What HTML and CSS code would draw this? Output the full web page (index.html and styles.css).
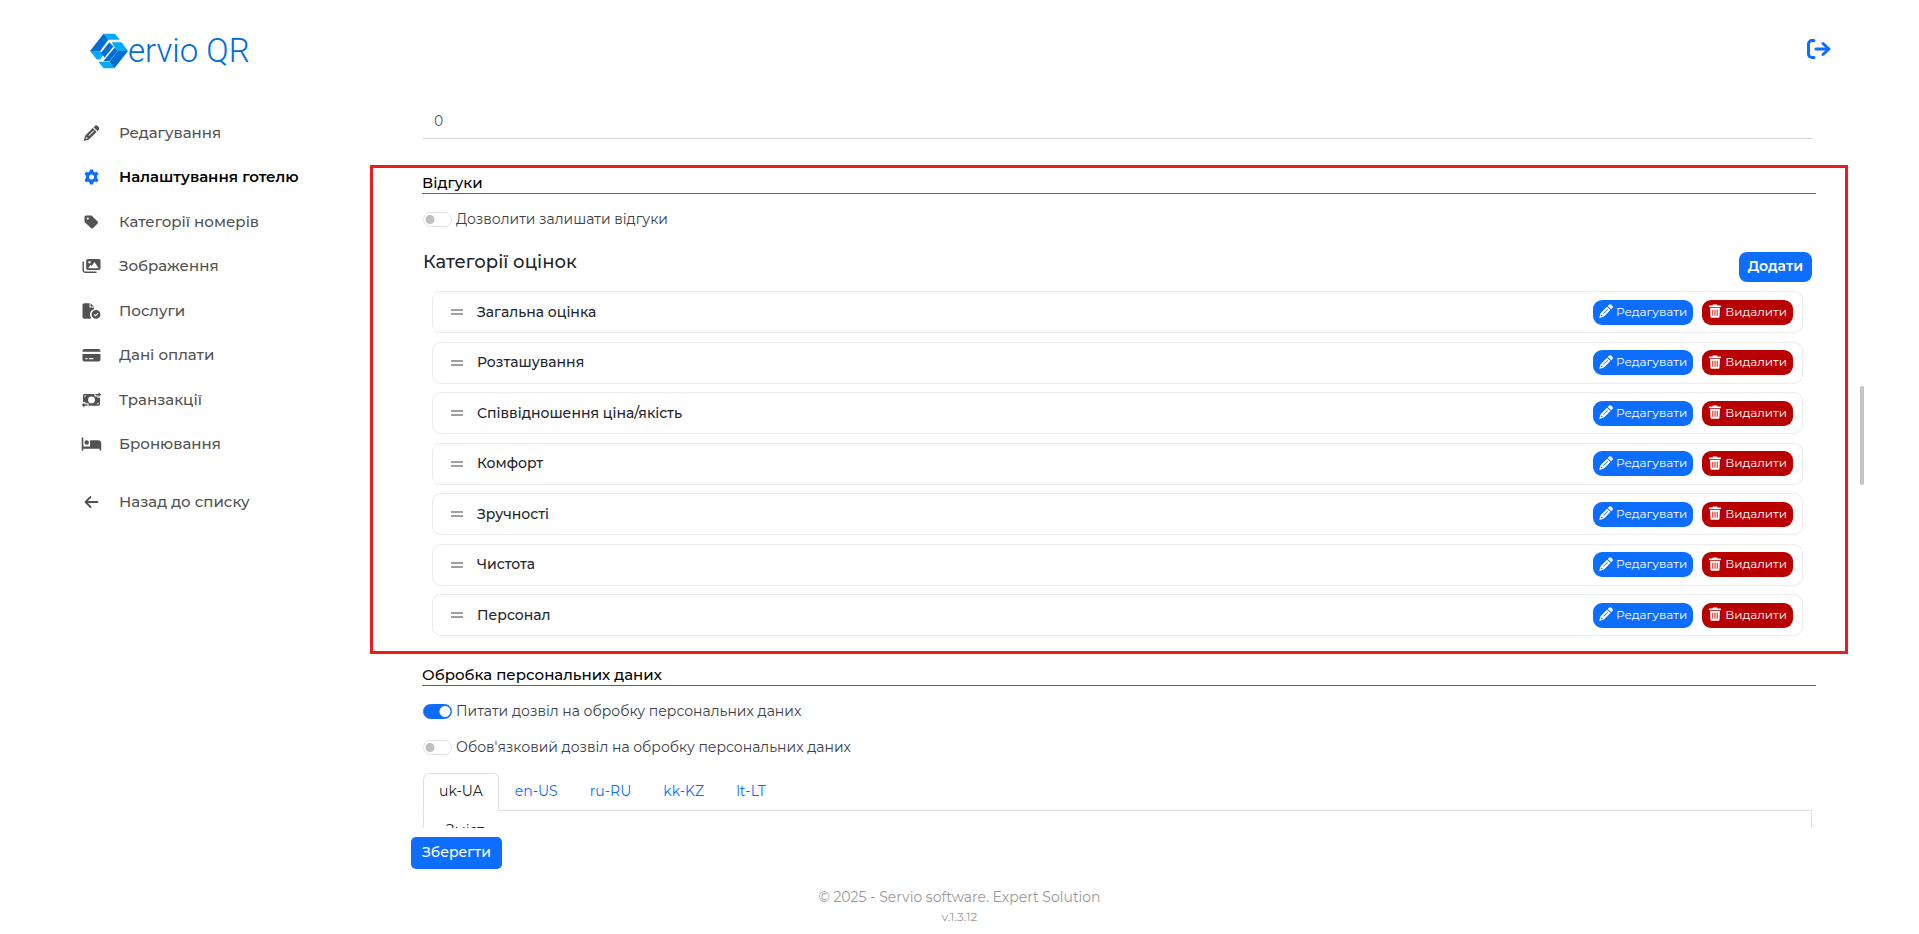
FILE: index.html
```html
<!DOCTYPE html>
<html lang="uk">
<head>
    <meta charset="UTF-8">
    <meta name="viewport" content="width=device-width, initial-scale=1">
    <title>Servio QR</title>
    <link rel="stylesheet" href="styles.css">
</head>
<body>
    <!-- Спільні іконки -->
    <svg class="sprite" aria-hidden="true">
        <symbol id="i-pencil" viewBox="0 0 16 16">
            <path fill-rule="evenodd" d="M11.300.9a2 2 0 0 1 2.800 0l1.100 1.100a2 2 0 0 1 0 2.800l-1.300 1.300-3.900-3.900zM9.200 3l3.900 3.900-7.200 7.200c-.3.3-.6.5-1 .6L.2 16l1.300-4.700c.1-.4.3-.7.6-1zM2.600 12l-.6 2 2-.6v-.9h-.9zM9.800 5.600 4.900 10.500l.6.6 4.900-4.900z"/>
        </symbol>
        <symbol id="i-trash" viewBox="0 0 14 16">
            <path fill-rule="evenodd" d="M4.700.5h4.600l.6 1.200H13a.8.8 0 0 1 0 2H1a.8.8 0 0 1 0-2h3.100zM1.400 4.500h11.200l-.4 9.800c0 .8-.7 1.500-1.500 1.500H3.300c-.8 0-1.500-.7-1.500-1.500zM4 6.500v7h1v-7zm2.500 0v7h1v-7zm2.500 0v7h1v-7z"/>
        </symbol>
        <symbol id="i-grip" viewBox="0 0 12 6">
            <path d="M0 0h12v2H0zM0 4h12v2H0z"/>
        </symbol>
    </svg>

    <header class="header">
        <a class="logo" href="#" aria-label="Servio QR">
            <svg class="logo-mark" viewBox="0 0 112 102">
                <path fill="#00aaff" d="M40 0h33l15 18H54z"/>
                <path fill="#006dd2" d="M40 0 54 18 30 51H0z"/>
                <path fill="#00aaff" d="M0 51h30l10 12-11 13H20z"/>
                <path fill="#006dd2" d="M57 25 69 38 43 70 32 57z"/>
                <path fill="#00aaff" d="M64 25h29l19 26H82L71 38z"/>
                <path fill="#006dd2" d="M73 41 82 51 57 81H39z"/>
                <path fill="#006dd2" d="M82 51h30L72 102 57 83z"/>
                <path fill="#00aaff" d="M25 83h32l15 19H40z"/>
            </svg>
            <span class="logo-text">ervio QR</span>
        </a>
        <a class="logout" href="#" aria-label="Вийти">
            <svg viewBox="0 0 24 20" fill="none" stroke="currentColor" stroke-width="3" stroke-linecap="round" stroke-linejoin="round">
                <path d="M7 1.500H5A3.500 3.500 0 0 0 1.500 5v10A3.500 3.500 0 0 0 5 18.500h2M9 10h13M16 4.500 22 10l-6 5.500"/>
            </svg>
        </a>
    </header>

    <div class="layout">
        <aside class="sidebar">
            <nav class="menu">
                <a class="menu-item" href="#">
                    <svg class="menu-icon" viewBox="0 0 16 16"><use href="#i-pencil"/></svg>
                    Редагування
                </a>
                <a class="menu-item active" href="#">
                    <svg class="menu-icon" viewBox="0 0 16 16"><path fill-rule="evenodd" d="M6.500.5h3l.5 2.100 1.400.8 2.100-.7L15 5.300l-1.600 1.500v2.400l1.600 1.500-1.500 2.600-2.100-.7-1.400.8-.5 2.100h-3L6 13.400l-1.400-.8-2.100.7L1 10.700l1.600-1.500V6.800L1 5.300l1.500-2.600 2.100.7L6 2.600zM8 5.500a2.500 2.500 0 1 0 0 5 2.500 2.500 0 0 0 0-5z"/></svg>
                    Налаштування готелю
                </a>
                <a class="menu-item" href="#">
                    <svg class="menu-icon" viewBox="0 0 16 16"><path fill-rule="evenodd" d="M1 3a1.500 1.500 0 0 1 1.500-1.500h5c.4 0 .8.2 1 .4l5.600 5.600a1.500 1.500 0 0 1 0 2l-4.500 4.600a1.500 1.500 0 0 1-2.100 0L1.500 8.600c-.3-.3-.5-.7-.5-1.100zm3.300.5a1.100 1.100 0 1 0 0 2.200 1.100 1.100 0 0 0 0-2.200z"/></svg>
                    Категорії номерів
                </a>
                <a class="menu-item" href="#">
                    <svg class="menu-icon" viewBox="0 0 18 16"><path fill-rule="evenodd" d="M5.500 1h10.700C17.200 1 18 1.800 18 2.800v7.400c0 1-.8 1.800-1.800 1.800H5.500c-1 0-1.800-.8-1.800-1.800V2.800C3.700 1.800 4.500 1 5.500 1zM7 3a1.200 1.200 0 1 0 0 2.400A1.200 1.200 0 0 0 7 3zM5.500 10.300h10.700L12 4 9.200 8 8 6.800z"/><path d="M0 4c0-1 1.400-1 1.400 0v8c0 1 .6 1.600 1.600 1.600h10.500c1 0 1 1.400 0 1.400H3c-1.700 0-3-1.300-3-3z"/></svg>
                    Зображення
                </a>
                <a class="menu-item" href="#">
                    <svg class="menu-icon" viewBox="0 0 18 16"><path d="M0 2C0 1 .8.2 1.800.2H7V4.500h4.500v1.800a5.300 5.300 0 0 0-2.700 8.600c-.2.5-.8.8-1.400.8H1.800C.8 15.700 0 15 0 14zM8 .2l3.500 3.300H8z"/><path fill-rule="evenodd" d="M13.500 7a4.400 4.400 0 1 1 0 8.800 4.400 4.400 0 0 1 0-8.800zm1.700 2.800L13 12l-1-1-.8.8 1.800 1.800 3-3z"/></svg>
                    Послуги
                </a>
                <a class="menu-item" href="#">
                    <svg class="menu-icon" viewBox="0 0 18 16"><path fill-rule="evenodd" d="M2 2h14c1.100 0 2 .9 2 2v.7H0V4c0-1.100.9-2 2-2zM0 7h18v5.500c0 1.100-.9 2-2 2H2c-1.100 0-2-.9-2-2zm3 4v1.200h2V11zm3.500 0v1.200H11V11z"/></svg>
                    Дані оплати
                </a>
                <a class="menu-item" href="#">
                    <svg class="menu-icon" viewBox="0 0 18 16"><path fill-rule="evenodd" d="M.5 3.500C.5 2.500 1.300 2 2.200 2H12v2.500h3v1.300h2.500V12c0 1-.8 1.700-1.700 1.700H6v-2.500H3V10H.5zM9 4.500a3.400 3.400 0 1 0 0 6.800 3.400 3.400 0 0 0 0-6.800zM2 3.500v2l2-2zm14 8.700v-2l-2 2z"/><path d="M13 2h3V.3L18.700 2.700 16 5V3.500h-3zM5 12.200H2v-1.700L-.7 13 2 15.400v-1.700h3z"/></svg>
                    Транзакції
                </a>
                <a class="menu-item" href="#">
                    <svg class="menu-icon" viewBox="0 0 18 16"><path d="M-.8 2c0-1 1.600-1 1.600 0v8.500h6.700V5.200c0-.5.4-.9.9-.9h6.800C17.300 4.300 18.700 5.500 18.700 7v7c0 1-1.600 1-1.600 0V12.700H.8V14c0 1-1.600 1-1.600 0z"/><circle cx="4.200" cy="6.500" r="2.200"/></svg>
                    Бронювання
                </a>
            </nav>
            <a class="menu-item menu-back" href="#">
                <svg class="menu-icon" viewBox="0 0 16 16" fill="none" stroke="currentColor" stroke-width="1.800" stroke-linecap="round" stroke-linejoin="round"><path d="M14 8H2.500M7 3 2 8l5 5"/></svg>
                Назад до списку
            </a>
        </aside>

        <main class="main">
            <div class="scroll-area">
                <input class="line-input" type="text" value="0" aria-label="Значення">

                <section class="section section-marked">
                    <h2 class="section-title">Відгуки</h2>
                    <div class="switch-list">
                        <label class="switch"><input type="checkbox"> Дозволити залишати відгуки</label>
                    </div>
                    <div class="categories-head">
                        <h3>Категорії оцінок</h3>
                        <button class="btn btn-add" type="button">Додати</button>
                    </div>
                    <ul class="categories">
                        <li class="category">
                            <svg class="grip"><use href="#i-grip"/></svg>
                            <span class="category-name">Загальна оцінка</span>
                            <button class="btn btn-sm" type="button"><svg><use href="#i-pencil"/></svg>Редагувати</button>
                            <button class="btn btn-sm btn-danger" type="button"><svg><use href="#i-trash"/></svg>Видалити</button>
                        </li>
                        <li class="category">
                            <svg class="grip"><use href="#i-grip"/></svg>
                            <span class="category-name">Розташування</span>
                            <button class="btn btn-sm" type="button"><svg><use href="#i-pencil"/></svg>Редагувати</button>
                            <button class="btn btn-sm btn-danger" type="button"><svg><use href="#i-trash"/></svg>Видалити</button>
                        </li>
                        <li class="category">
                            <svg class="grip"><use href="#i-grip"/></svg>
                            <span class="category-name">Співвідношення ціна/якість</span>
                            <button class="btn btn-sm" type="button"><svg><use href="#i-pencil"/></svg>Редагувати</button>
                            <button class="btn btn-sm btn-danger" type="button"><svg><use href="#i-trash"/></svg>Видалити</button>
                        </li>
                        <li class="category">
                            <svg class="grip"><use href="#i-grip"/></svg>
                            <span class="category-name">Комфорт</span>
                            <button class="btn btn-sm" type="button"><svg><use href="#i-pencil"/></svg>Редагувати</button>
                            <button class="btn btn-sm btn-danger" type="button"><svg><use href="#i-trash"/></svg>Видалити</button>
                        </li>
                        <li class="category">
                            <svg class="grip"><use href="#i-grip"/></svg>
                            <span class="category-name">Зручності</span>
                            <button class="btn btn-sm" type="button"><svg><use href="#i-pencil"/></svg>Редагувати</button>
                            <button class="btn btn-sm btn-danger" type="button"><svg><use href="#i-trash"/></svg>Видалити</button>
                        </li>
                        <li class="category">
                            <svg class="grip"><use href="#i-grip"/></svg>
                            <span class="category-name">Чистота</span>
                            <button class="btn btn-sm" type="button"><svg><use href="#i-pencil"/></svg>Редагувати</button>
                            <button class="btn btn-sm btn-danger" type="button"><svg><use href="#i-trash"/></svg>Видалити</button>
                        </li>
                        <li class="category">
                            <svg class="grip"><use href="#i-grip"/></svg>
                            <span class="category-name">Персонал</span>
                            <button class="btn btn-sm" type="button"><svg><use href="#i-pencil"/></svg>Редагувати</button>
                            <button class="btn btn-sm btn-danger" type="button"><svg><use href="#i-trash"/></svg>Видалити</button>
                        </li>
                    </ul>
                </section>

                <section class="section">
                    <h2 class="section-title">Обробка персональних даних</h2>
                    <div class="switch-list">
                        <label class="switch"><input type="checkbox" checked> Питати дозвіл на обробку персональних даних</label>
                        <label class="switch"><input type="checkbox"> Обов'язковий дозвіл на обробку персональних даних</label>
                    </div>
                    <div class="tabs" role="tablist">
                        <button class="tab active" type="button" role="tab">uk-UA</button>
                        <button class="tab" type="button" role="tab">en-US</button>
                        <button class="tab" type="button" role="tab">ru-RU</button>
                        <button class="tab" type="button" role="tab">kk-KZ</button>
                        <button class="tab" type="button" role="tab">lt-LT</button>
                    </div>
                    <div class="tab-panel">Зміст</div>
                </section>
            </div>
            <button class="btn btn-save" type="submit">Зберегти</button>
        </main>
        <div class="scroll-thumb"></div>
    </div>

    <footer class="footer">
        <p>© 2025 - Servio software. Expert Solution</p>
        <p class="version">v.1.3.12</p>
    </footer>
</body>
</html>
```

FILE: styles.css
```css
:root {
    --primary: #0d6efd;
    --danger: #b90000;
    --text: #212529;
    --muted: #525252;
    --border: #dee2e6;
}

* {
    box-sizing: border-box;
}

body {
    margin: 0;
    height: 100vh;
    display: flex;
    flex-direction: column;
    background: #fff;
    color: var(--text);
    font-family: Montserrat, Inter, sans-serif;
    font-size: 14px;
}

h2, h3, p, ul {
    margin: 0;
    padding: 0;
}

a {
    text-decoration: none;
}

button, input {
    font-family: inherit;
    font-size: inherit;
}

.sprite {
    display: none;
}

/* Шапка */
.header {
    height: 104px;
    padding: 33px 88px 0 90px;
    display: flex;
    justify-content: space-between;
    align-items: flex-start;
}

.logo {
    display: flex;
    align-items: flex-start;
    color: #006dd2;
}

.logo-mark {
    width: 38px;
    height: 36px;
}

.logo-text {
    font-family: Roboto, sans-serif;
    font-weight: 300;
    font-size: 33px;
    line-height: 36px;
}

.logout {
    padding-top: 6px;
    color: var(--primary);
}

.logout svg {
    display: block;
    width: 24px;
    height: 20px;
}

.layout {
    position: relative;
    flex: 1;
    min-height: 0;
    display: grid;
    grid-template-columns: 370px 1fr;
    padding-right: 71px;
}

/* Меню */
.sidebar {
    padding: 17px 0 0 82px;
}

.menu {
    display: flex;
    flex-direction: column;
    justify-content: space-between;
    min-height: 335px;
}

.menu-item {
    display: flex;
    align-items: center;
    gap: 18px;
    color: var(--muted);
    font-size: 15px;
    font-weight: 500;
    line-height: 24px;
}

.menu-item.active {
    color: #000;
    font-weight: 600;
}

.menu-icon {
    width: 19px;
    height: 16px;
    fill: currentColor;
    overflow: visible;
}

.menu-item.active .menu-icon {
    color: var(--primary);
}

.menu-back {
    margin-top: 34px;
}

.menu-back .menu-icon {
    fill: none;
}

/* Контент */
.main {
    display: flex;
    flex-direction: column;
    align-items: flex-start;
    min-height: 0;
}

.scroll-area {
    flex: 1;
    width: 100%;
    min-height: 0;
    overflow: hidden;
}

.scroll-thumb {
    position: absolute;
    right: 55px;
    top: 282px;
    width: 4px;
    height: 99px;
    border-radius: 2px;
    background: #c4c4c4;
}

.line-input {
    display: block;
    width: calc(100% - 89px);
    height: 35px;
    margin: 0 36px 26px 53px;
    padding: 0 11px;
    border: 0;
    border-bottom: 1px solid #ced4da;
    background: none;
    color: var(--muted);
}

.section {
    padding: 0 32px 0 52px;
    margin-top: 10px;
}

.section-marked {
    border: 3px solid #ec1c1c;
    padding: 4px 29px 15px 49px;
    margin-top: 0;
}

.section-title {
    border-bottom: 1px solid var(--primary);
    color: #000;
    font-size: 15px;
    line-height: 21px;
    font-weight: 500;
}

.switch-list {
    display: flex;
    flex-direction: column;
    gap: 14px;
    padding: 14px 1px 0;
}

.switch {
    display: flex;
    align-items: center;
    gap: 4px;
    color: #3c4043;
    line-height: 22px;
}

.switch input {
    appearance: none;
    width: 29px;
    height: 15px;
    margin: 0;
    border: 1px solid var(--border);
    border-radius: 8px;
    background: radial-gradient(circle at 6px 50%, #bfbfbf 4px, transparent 5px);
}

.switch input:checked {
    border-color: var(--primary);
    background: radial-gradient(circle at 21px 50%, #fff 5px, var(--primary) 6px);
}

.categories-head {
    display: flex;
    justify-content: space-between;
    align-items: flex-start;
    padding: 22px 4px 9px 1px;
}

.categories-head h3 {
    font-size: 18px;
    line-height: 21px;
    font-weight: 500;
}

.btn {
    border: 0;
    background: var(--primary);
    color: #fff;
    font-weight: 500;
    cursor: pointer;
}

.btn-add {
    height: 30px;
    padding: 0 9px 2px;
    border-radius: 8px;
    font-weight: 600;
}

.categories {
    display: flex;
    flex-direction: column;
    justify-content: space-between;
    min-height: 345px;
    padding: 0 13px 0 10px;
    list-style: none;
}

.category {
    display: flex;
    align-items: center;
    height: 42px;
    padding: 0 9px 0 18px;
    border: 1px solid #ebebeb;
    border-radius: 9px;
}

.grip {
    width: 12px;
    height: 6px;
    margin-right: 14px;
    fill: #a0a0a0;
}

.category-name {
    flex: 1;
    padding-bottom: 1px;
    font-weight: 500;
}

.btn-sm {
    display: flex;
    align-items: center;
    gap: 3px;
    height: 25px;
    padding: 0 6px 2px;
    border-radius: 9px;
    font-size: 12px;
    font-weight: 400;
}

.btn-sm svg {
    width: 14px;
    height: 14px;
    fill: #fff;
}

.btn-danger {
    margin-left: 9px;
    background: var(--danger);
}

/* Вкладки мов */
.tabs {
    display: flex;
    margin: 15px 4px 0 1px;
    border-bottom: 1px solid var(--border);
}

.tab {
    height: 38px;
    margin-bottom: -1px;
    padding: 0 15px 2px;
    border: 1px solid transparent;
    border-radius: 6px 6px 0 0;
    background: none;
    color: var(--primary);
}

.tab.active {
    border-color: var(--border) var(--border) #fff;
    background: #fff;
    color: var(--text);
}

.tab-panel {
    margin: 0 4px 0 1px;
    padding: 9px 22px;
    border: 1px solid var(--border);
    border-top: 0;
    line-height: 20px;
}

.btn-save {
    height: 32px;
    margin: 9px 0 0 41px;
    padding: 0 11px 2px;
    border-radius: 5px;
}

.footer {
    padding: 18px 0 8px;
    text-align: center;
    color: #999;
    font-size: 14px;
    line-height: 20px;
}

.version {
    font-size: 12px;
    line-height: 19px;
}
```
